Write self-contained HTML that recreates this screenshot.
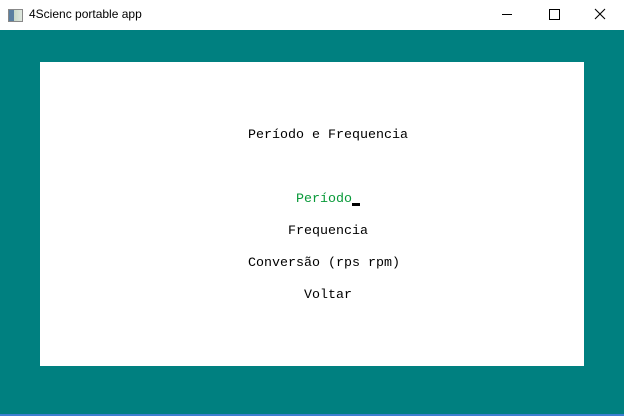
<!DOCTYPE html><html><head><style>
body{margin:0;width:624px;height:416px;overflow:hidden;background:#008080;position:relative;font-family:"Liberation Sans",sans-serif}
.tb{position:absolute;left:0;top:0;width:624px;height:30px;background:#fff}
.t{position:absolute;font-family:"Liberation Mono",monospace;font-size:13.33px;line-height:16px;color:#000;white-space:pre}
.panel{position:absolute;left:40px;top:62px;width:544px;height:304px;background:#fff}
</style></head><body>
<div class="tb">
<div style="position:absolute;left:8px;top:9px;width:13px;height:11px;border:1px solid #888;background:linear-gradient(90deg,#5a7fa0 40%,#c8d8c8 40%,#e0e8e0)"></div>
<div style="position:absolute;left:29px;top:7px;font-size:12px;color:#000">4Scienc portable app</div>
<div style="position:absolute;left:502px;top:14px;width:10px;height:1px;background:#000"></div>
<div style="position:absolute;left:549px;top:9px;width:9px;height:9px;border:1px solid #000"></div>
<svg style="position:absolute;left:594px;top:8px" width="12" height="12"><path d="M1 1L11 11M11 1L1 11" stroke="#000" stroke-width="1.1"/></svg>
</div>
<div class="panel"></div>
<div class="t" style="left:248px;top:128px">Período e Frequencia</div>
<div class="t" style="left:296px;top:192px;color:#0a9a3a">Período</div>
<div style="position:absolute;left:352px;top:203px;width:8px;height:3px;background:#000"></div>
<div class="t" style="left:288px;top:224px">Frequencia</div>
<div class="t" style="left:248px;top:256px">Conversão (rps rpm)</div>
<div class="t" style="left:304px;top:288px">Voltar</div>
<div style="position:absolute;left:0;top:414px;width:624px;height:2px;background:#3c7fd0"></div>
</body></html>
